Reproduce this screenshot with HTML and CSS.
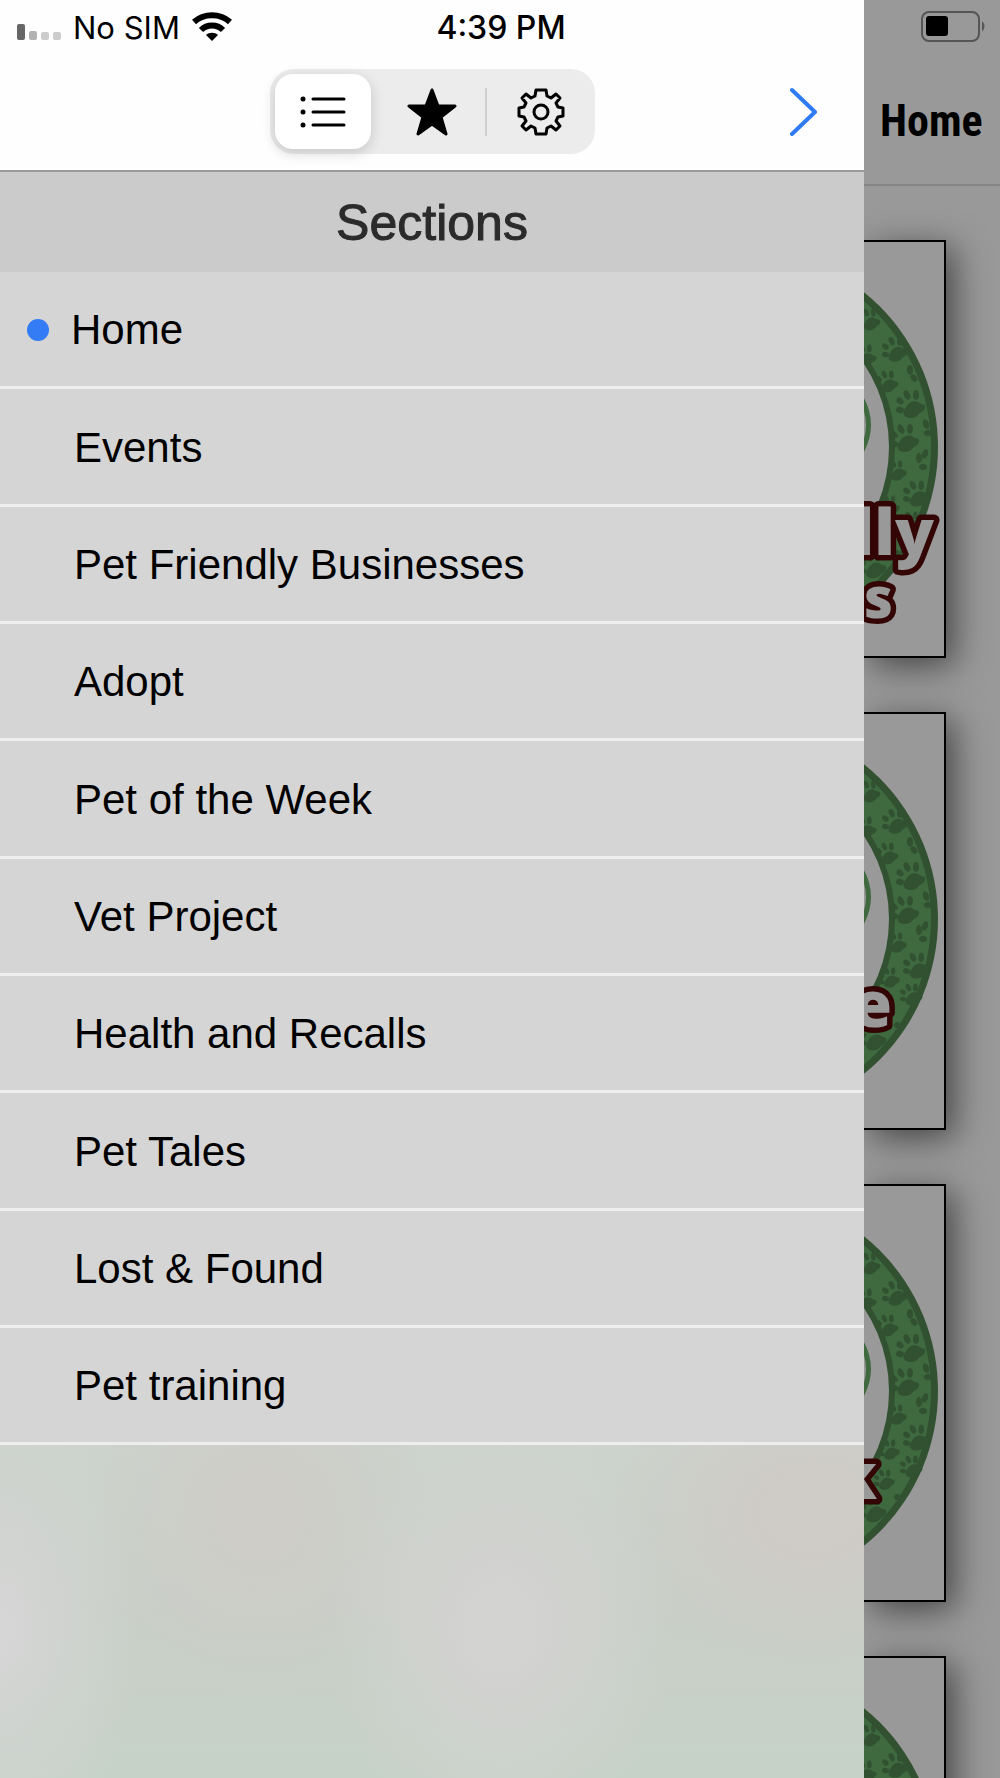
FILE: index.html
```html
<!DOCTYPE html>
<html lang="en">
<head>
    <meta charset="UTF-8">
    <meta name="viewport" content="width=device-width, initial-scale=1.0">
    <title>Sections</title>
    <link rel="stylesheet" href="styles.css">
</head>
<body>
    <!-- shared shapes -->
    <svg class="defs" aria-hidden="true">
        <symbol id="paw" viewBox="-18 -20 36 36" overflow="visible">
            <path d="M-7 -1C-4 -6 1 -8 5 -6C8 -3 13 -5 12 0C11 4 7 4 5 7C2 11 -7 11 -9 7C-10 3 -9 2 -7 -1Z"/>
            <ellipse cx="-13" cy="-7" rx="3" ry="4" transform="rotate(-50 -13 -7)"/>
            <ellipse cx="-13" cy="2" rx="3" ry="4" transform="rotate(-75 -13 2)"/>
            <ellipse cx="-6" cy="-13" rx="3" ry="5" transform="rotate(-25 -6 -13)"/>
            <ellipse cx="3" cy="-13" rx="3" ry="5"/>
        </symbol>
        <symbol id="ring" viewBox="0 2 80 414">
            <circle cx="-125" cy="207" r="199" fill="#315131"/>
            <circle cx="-125" cy="207" r="192" fill="#3f6a3f"/>
            <g fill="#315131">
                <use href="#paw" x="-7" y="67" width="28" height="28"/>
                <use href="#paw" x="17" y="95" width="32" height="32"/>
                <use href="#paw" x="-11" y="103" width="28" height="28"/>
                <use href="#paw" x="11" y="129" width="28" height="28"/>
                <use href="#paw" x="31" y="148" width="36" height="36"/>
                <use href="#paw" x="25" y="182" width="36" height="36"/>
                <use href="#paw" x="21" y="219" width="26" height="26"/>
                <use href="#paw" x="38" y="239" width="33" height="33"/>
                <use href="#paw" x="14" y="254" width="26" height="26"/>
                <use href="#paw" x="35" y="270" width="28" height="28"/>
                <use href="#paw" x="9" y="284" width="26" height="26"/>
                <use href="#paw" x="-6" y="310" width="34" height="34"/>
                <ellipse cx="46" cy="130" rx="3" ry="5"/>
                <ellipse cx="50" cy="138" rx="3" ry="4" transform="rotate(-40 50 138)"/>
                <ellipse cx="62" cy="184" rx="3" ry="5" transform="rotate(-20 62 184)"/>
                <ellipse cx="64" cy="193" rx="4" ry="3"/>
                <ellipse cx="61" cy="214" rx="3" ry="5" transform="rotate(20 61 214)"/>
                <ellipse cx="55" cy="218" rx="3" ry="5"/>
                <ellipse cx="59" cy="227" rx="4" ry="3"/>
                <circle cx="33" cy="313" r="3"/>
            </g>
            <circle cx="-125" cy="207" r="156" fill="#315131"/>
            <circle cx="-125" cy="207" r="150" fill="#999"/>
            <path d="M-4 156Q13 185 -4 214" fill="none" stroke="#3f6a3f" stroke-width="5"/>
        </symbol>
    </svg>

    <div class="app">
        <div class="status-bar">
            <div class="carrier">
                <svg class="signal" width="44" height="16" viewBox="0 0 44 16" aria-hidden="true">
                    <rect width="8" height="16" rx="2" fill="#666"/>
                    <rect x="12" y="7" width="8" height="9" rx="2" fill="#b2b2b2"/>
                    <rect x="24" y="8" width="8" height="8" rx="2" fill="#ccc"/>
                    <rect x="36" y="8" width="8" height="8" rx="2" fill="#ccc"/>
                </svg>
                <span>No SIM</span>
                <svg class="wifi" width="40" height="30" viewBox="0 0 40 30" aria-hidden="true">
                    <g fill="none" stroke="#000" stroke-width="6">
                        <path d="M2 10C12 1 28 1 38 10"/>
                        <path d="M9 18C15 12 25 12 31 18"/>
                    </g>
                    <path d="M14 23C17 20 23 20 26 23L20 29Z"/>
                </svg>
            </div>
            <span class="time">4:39 PM</span>
            <svg class="battery" width="64" height="32" viewBox="0 0 64 32" aria-hidden="true">
                <rect x="1" y="1" width="57" height="29" rx="7" fill="none" stroke="#555" stroke-width="2"/>
                <rect x="5" y="5" width="22" height="20" rx="3"/>
                <path d="M61 10Q66 15 61 21Z" fill="#555"/>
            </svg>
        </div>

        <aside class="drawer">
            <header class="toolbar">
                <div class="tabs">
                    <button class="tab active" aria-label="Sections">
                        <svg width="46" height="32" viewBox="0 0 46 32" aria-hidden="true">
                            <g fill="none" stroke="#000" stroke-width="3" stroke-linecap="round">
                                <path d="M13 3H44M13 16H44M13 29H44"/>
                            </g>
                            <circle cx="3" cy="3" r="2.5"/>
                            <circle cx="3" cy="16" r="2.5"/>
                            <circle cx="3" cy="29" r="2.5"/>
                        </svg>
                    </button>
                    <button class="tab" aria-label="Favorites">
                        <svg width="50" height="48" viewBox="0 0 50 48" aria-hidden="true">
                            <path d="M25 2L31 18H48L34 29L39 46L25 36L11 46L16 29L2 18H19Z" stroke="#000" stroke-width="3" stroke-linejoin="round"/>
                        </svg>
                    </button>
                    <button class="tab" aria-label="Settings">
                        <svg width="48" height="48" viewBox="0 0 48 48" aria-hidden="true">
                            <g fill="none" stroke="#000" stroke-width="3" stroke-linejoin="round">
                                <path d="M19 2H29L30 8Q32 9 34 10L39 6L43 10L39 15L41 19L46 20V28L41 29L39 33L43 38L39 42L34 38Q32 39 30 40L29 46H19L18 40Q16 39 14 38L9 42L5 38L9 33L7 29L2 28V20L7 19L9 15L5 10L9 6L14 10Q16 9 18 8Z"/>
                                <circle cx="24" cy="24" r="7"/>
                            </g>
                        </svg>
                    </button>
                </div>
                <button class="close" aria-label="Close menu">
                    <svg width="28" height="50" viewBox="0 0 28 50" aria-hidden="true">
                        <path d="M2 3L25 25L2 47" fill="none" stroke="#2f7bf6" stroke-width="4" stroke-linecap="round" stroke-linejoin="round"/>
                    </svg>
                </button>
            </header>
            <h1 class="drawer-title">Sections</h1>
            <nav class="menu">
                <a class="menu-item current" href="#home">Home</a>
                <a class="menu-item" href="#events">Events</a>
                <a class="menu-item" href="#businesses">Pet Friendly Businesses</a>
                <a class="menu-item" href="#adopt">Adopt</a>
                <a class="menu-item" href="#week">Pet of the Week</a>
                <a class="menu-item" href="#vet">Vet Project</a>
                <a class="menu-item" href="#health">Health and Recalls</a>
                <a class="menu-item" href="#tales">Pet Tales</a>
                <a class="menu-item" href="#lost">Lost &amp; Found</a>
                <a class="menu-item" href="#training">Pet training</a>
            </nav>
            <div class="drawer-rest"></div>
        </aside>

        <main class="page">
            <h2 class="page-title">Home</h2>
            <div class="cards">
                <div class="card">
                    <svg class="logo" viewBox="0 2 80 414">
                        <use href="#ring" y="2" width="80" height="414"/>
                        <text class="logo-text small" x="29" y="378">es</text>
                        <text class="logo-text" x="70" y="315">lly</text>
                    </svg>
                </div>
                <div class="card">
                    <svg class="logo" viewBox="0 2 80 414">
                        <use href="#ring" y="2" width="80" height="414"/>
                        <text class="logo-text" x="28" y="315">e</text>
                    </svg>
                </div>
                <div class="card">
                    <svg class="logo" viewBox="0 2 80 414">
                        <use href="#ring" y="2" width="80" height="414"/>
                        <text class="logo-text" x="13" y="315">k</text>
                    </svg>
                </div>
                <div class="card">
                    <svg class="logo" viewBox="0 2 80 414">
                        <use href="#ring" y="2" width="80" height="414"/>
                    </svg>
                </div>
            </div>
        </main>
    </div>
</body>
</html>
```

FILE: styles.css
```css
* {
    box-sizing: border-box;
}

body {
    margin: 0;
    font-family: "Liberation Sans", Arial, sans-serif;
    color: #000;
    background: #999;
}

svg {
    display: block;
}

.defs {
    position: absolute;
    width: 0;
    height: 0;
}

.app {
    position: relative;
    display: grid;
    grid-template-columns: 1fr 136px;
    height: 100vh;
    overflow: hidden;
}

/* status bar lies over both the drawer and the page */
.status-bar {
    position: absolute;
    top: 0;
    left: 0;
    right: 0;
    display: grid;
    grid-template-columns: 1fr auto 1fr;
    align-items: center;
    height: 54px;
    padding: 0 15px 0 17px;
    font-family: Inter, sans-serif;
    font-size: 31px;
}

.carrier {
    display: flex;
    align-items: center;
    gap: 12px;
}

.signal {
    margin-top: 10px;
}

.time {
    font-size: 32px;
    font-weight: 500;
}

.battery {
    justify-self: end;
}

.drawer {
    display: flex;
    flex-direction: column;
    background: #d5d5d5;
}

.toolbar {
    display: grid;
    grid-template-columns: 1fr auto 1fr;
    align-items: center;
    padding: 69px 46px 16px;
    background: #fefefe;
    border-bottom: 2px solid #999;
}

.tabs {
    grid-column: 2;
    display: grid;
    grid-template-columns: repeat(3, 1fr);
    width: 325px;
    height: 85px;
    padding: 5px;
    border-radius: 24px;
    background: #ececec;
}

.tab {
    position: relative;
    display: flex;
    justify-content: center;
    align-items: center;
    padding: 0;
    border: none;
    border-radius: 18px;
    background: none;
    cursor: pointer;
}

.tab.active {
    margin-right: 9px;
    background: #fff;
    box-shadow: 0 4px 14px rgba(0, 0, 0, 0.16);
}

.tab:last-child {
    padding-left: 8px;
}

.tab:last-child::before {
    content: "";
    position: absolute;
    left: 0;
    width: 2px;
    height: 48px;
    background: #d0d0d0;
}

.close {
    justify-self: end;
    padding: 0;
    border: none;
    background: none;
    cursor: pointer;
}

.drawer-title {
    margin: 0;
    padding-top: 2px;
    font-size: 50px;
    font-weight: normal;
    line-height: 98px;
    text-align: center;
    color: #2b2b2b;
    background: #cbcbcb;
    -webkit-text-stroke: 1px #2b2b2b;
}

.menu {
    display: grid;
    grid-template-rows: repeat(10, 1fr);
    height: 66vh;
}

.menu-item {
    display: flex;
    align-items: center;
    padding: 2px 0 0 74px;
    border-bottom: 3px solid #eee;
    font-size: 42px;
    color: #000;
    text-decoration: none;
}

.menu-item.current {
    gap: 22px;
    padding-left: 27px;
}

.menu-item.current::before {
    content: "";
    width: 22px;
    height: 22px;
    border-radius: 50%;
    background: #347bf6;
}

/* blurred page showing through */
.drawer-rest {
    flex: 1;
    background:
        radial-gradient(ellipse 16% 70% at 0% 55%, #d6d6d6, transparent),
        radial-gradient(ellipse 20% 65% at 58% 55%, #d3d3d1 20%, transparent),
        radial-gradient(ellipse 24% 48% at 94% 20%, #cfcbc7 20%, transparent),
        radial-gradient(ellipse 20% 55% at 30% 20%, #cecdc8 20%, transparent),
        linear-gradient(#ccd3cc, #c9cfc8 50%, #c6d2c8);
}

.page {
    overflow: hidden;
    background: #999;
}

.page-title {
    margin: 0;
    padding: 58px 0 0 16px;
    border-bottom: 2px solid #858585;
    font-family: "Roboto Condensed", Roboto, sans-serif;
    font-size: 44px;
    line-height: 126px;
}

.cards {
    display: grid;
    gap: 54px;
    padding: 54px 54px 54px 0;
}

.card {
    border: 2px solid #000;
    border-left: none;
    background: #999;
    box-shadow: 8px 8px 34px rgba(0, 0, 0, 0.55);
}

.logo {
    width: 100%;
}

.logo-text {
    font-family: "Open Sans", sans-serif;
    font-size: 64px;
    font-weight: 800;
    text-anchor: end;
    fill: #999;
    stroke: #330505;
    stroke-width: 11px;
    stroke-linejoin: round;
    paint-order: stroke;
}

.logo-text.small {
    font-size: 56px;
}
```
